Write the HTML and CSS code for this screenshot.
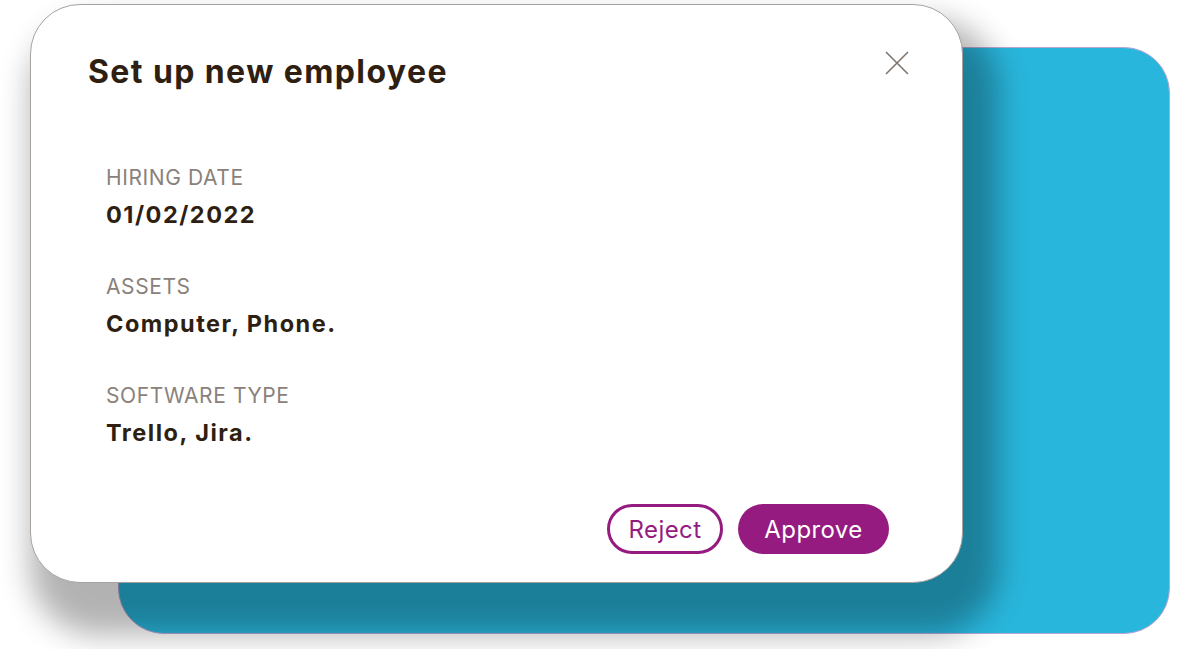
FILE: index.html
```html
<!DOCTYPE html>
<html lang="en">

<head>
    <meta charset="UTF-8">
    <meta name="viewport" content="width=device-width, initial-scale=1.0">
    <title>Set up new employee</title>
    <link rel="stylesheet" href="styles.css">
</head>

<body>
    <div class="stage">
        <div class="backCard"></div>

        <div class="dialog">
            <header class="dialogHeader">
                <h1>Set up new employee</h1>
                <button type="button" class="closeBtn" aria-label="Close">
                    <svg width="24" height="24" viewBox="0 0 24 24">
                        <path d="M1 1 L23 23 M23 1 L1 23" stroke="#7d746e" stroke-width="1.6" fill="none" />
                    </svg>
                </button>
            </header>

            <dl class="details">
                <div class="field">
                    <dt>Hiring date</dt>
                    <dd>01/02/2022</dd>
                </div>
                <div class="field">
                    <dt>Assets</dt>
                    <dd>Computer, Phone.</dd>
                </div>
                <div class="field">
                    <dt>Software type</dt>
                    <dd>Trello, Jira.</dd>
                </div>
            </dl>

            <div class="actions">
                <button type="button" class="btn btnOutline">Reject</button>
                <button type="button" class="btn btnFilled">Approve</button>
            </div>
        </div>
    </div>
</body>

</html>
```

FILE: styles.css
```css
body {
    margin: 0;
    padding: 0;
    background: #ffffff;
    font-family: 'Inter', 'Noto Sans', sans-serif;
}

.stage {
    width: 1200px;
    height: 649px;
    display: grid;
    overflow: hidden;
}

.backCard,
.dialog {
    grid-area: 1 / 1;
    box-sizing: border-box;
}

.backCard {
    margin: 47px 0 0 118px;
    width: 1052px;
    height: 587px;
    background: #29b6dc;
    border: 1px solid #b9a6d6;
    border-radius: 46px;
}

.dialog {
    margin: 4px 0 0 30px;
    width: 933px;
    height: 579px;
    background: #ffffff;
    border: 1px solid #a8a29e;
    border-radius: 50px;
    box-shadow: 18px 34px 30px 18px rgba(0, 0, 0, 0.3);
    padding: 47px 73px 0 57px;
    display: flex;
    flex-direction: column;
    position: relative;
}

.dialogHeader {
    display: flex;
    justify-content: space-between;
    align-items: flex-start;
}

h1 {
    margin: 0;
    font-size: 32px;
    line-height: 40px;
    font-weight: 700;
    letter-spacing: 1.4px;
    color: #2e1f12;
}

.closeBtn {
    margin: -1px -20px 0 0;
    padding: 0;
    border: none;
    background: transparent;
    width: 24px;
    height: 24px;
    cursor: pointer;
}

.details {
    margin: 73px 0 0 18px;
    display: flex;
    flex-direction: column;
    gap: 44px;
}

.field dt {
    font-size: 21px;
    line-height: 26px;
    letter-spacing: 0.6px;
    color: #8a817b;
    text-transform: uppercase;
}

.field dd {
    margin: 9px 0 0 0;
    font-size: 23.5px;
    line-height: 30px;
    font-weight: 700;
    letter-spacing: 1.5px;
    color: #2e1f12;
}

.actions {
    margin-top: auto;
    margin-bottom: 28px;
    display: flex;
    justify-content: flex-end;
    gap: 15px;
}

.btn {
    font-family: 'Inter', 'Noto Sans', sans-serif;
    font-size: 24px;
    letter-spacing: 0.4px;
    height: 50px;
    border-radius: 25px;
    box-sizing: border-box;
    cursor: pointer;
}

.btnOutline {
    width: 116px;
    background: #ffffff;
    color: #951b81;
    border: 3px solid #951b81;
}

.btnFilled {
    width: 151px;
    background: #951b81;
    color: #ffffff;
    border: none;
}
```
